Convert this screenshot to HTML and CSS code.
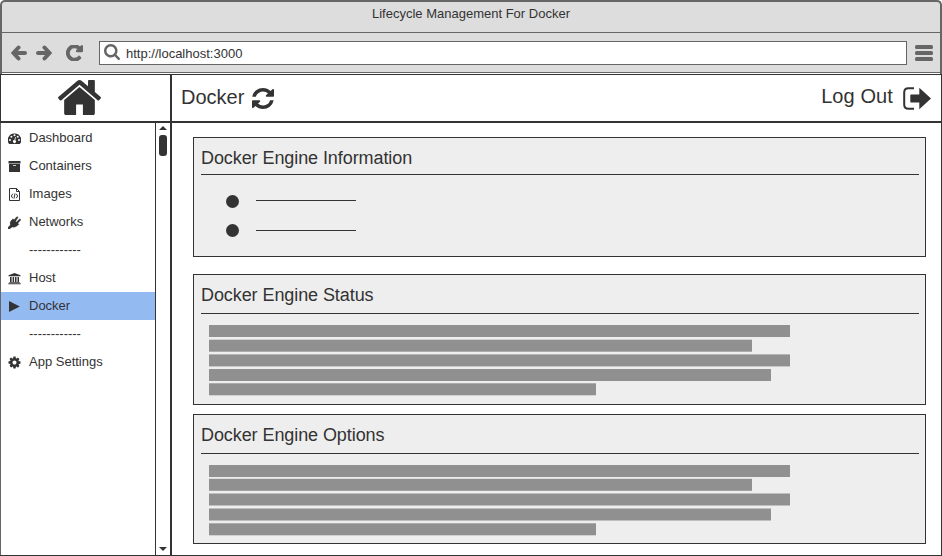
FILE: index.html
```html
<!DOCTYPE html>
<html lang="en">
<head>
<meta charset="utf-8">
<title>Lifecycle Management For Docker</title>
<link rel="stylesheet" href="styles.css">
</head>
<body>
<div class="window">
  <header class="chrome">
    <div class="titlebar">Lifecycle Management For Docker</div>
    <div class="toolbar">
      <svg class="nav back" viewBox="0 0 17 16"><path d="M8.500 2.500 3.500 8l5 5.500M4 8h11" fill="none" stroke="currentColor" stroke-width="4" stroke-linecap="round" stroke-linejoin="miter"/></svg>
      <svg class="nav forward" viewBox="0 0 17 16"><path d="M8.500 2.500l5 5.500-5 5.500M13 8H2" fill="none" stroke="currentColor" stroke-width="4" stroke-linecap="round" stroke-linejoin="miter"/></svg>
      <svg class="nav reload" viewBox="128 128 1536 1536"><path stroke="currentColor" stroke-width="110" d="M1664 256v448q0 26-19 45t-45 19h-448q-42 0-59-40-17-39 14-69l138-138q-148-137-349-137-104 0-198.500 40.500t-163.500 109.500-109.500 163.500-40.500 198.500 40.500 198.500 109.500 163.500 163.500 109.500 198.500 40.500q119 0 225-52t179-147q7-10 23-12 15 0 25 9l137 138q9 8 9.500 20.500t-7.500 22.500q-109 132-264 204.500t-327 72.500q-156 0-298-61t-245-164-164-245-61-298 61-298 164-245 245-164 298-61q147 0 284.500 55.500t244.500 156.500l130-129q29-31 70-14 39 17 39 59z"/></svg>
      <div class="address">
        <svg class="search" viewBox="64 128 1664 1664"><path d="M1216 832q0-185-131.500-316.500t-316.500-131.500-316.500 131.500-131.500 316.500 131.500 316.500 316.500 131.500 316.500-131.500 131.500-316.500zm512 832q0 52-38 90t-90 38q-54 0-90-38l-343-342q-179 124-399 124-143 0-273.500-55.500t-225-150-150-225-55.500-273.500 55.500-273.500 150-225 225-150 273.500-55.500 273.500 55.500 225 150 150 225 55.500 273.500q0 220-124 399l343 343q37 37 37 90z"/></svg>
        <span>http://localhost:3000</span>
      </div>
      <svg class="burger" viewBox="0 0 18 16"><rect width="18" height="4" rx="1.500"/><rect y="6" width="18" height="4" rx="1.500"/><rect y="12" width="18" height="4" rx="1.500"/></svg>
    </div>
  </header>
  <div class="topbar">
    <div class="brand">
      <svg class="home" viewBox="89 253 1614 1283" preserveAspectRatio="none"><path d="M1472 992v480q0 26-19 45t-45 19h-384v-384h-256v384h-384q-26 0-45-19t-19-45v-480q0-1 .5-3t.5-3l575-474 575 474q1 2 1 6zm223-69l-62 74q-8 9-21 11h-3q-13 0-21-7l-692-577-692 577q-12 8-24 7-13-2-21-11l-62-74q-8-10-7-23.500t11-21.500l719-599q32-26 76-26t76 26l244 204v-195q0-14 9-23t23-9h192q14 0 23 9t9 23v408l219 182q10 8 11 21.500t-7 23.500z"/></svg>
    </div>
    <div class="heading">
      <h1>Docker</h1>
      <svg class="refresh" viewBox="128 128 1536 1536" preserveAspectRatio="none"><path d="M1639 1056q0 5-1 7-64 268-268 434.500t-478 166.500q-146 0-282.500-55t-243.500-157l-129 129q-19 19-45 19t-45-19-19-45v-448q0-26 19-45t45-19h448q26 0 45 19t19 45-19 45l-137 137q71 66 161 102t187 36q134 0 250-65t186-179q11-17 53-117 8-23 30-23h192q13 0 22.500 9.500t9.500 22.500zm25-800v448q0 26-19 45t-45 19h-448q-26 0-45-19t-19-45 19-45l138-138q-148-137-349-137-134 0-250 65t-186 179q-11 17-53 117-8 23-30 23h-199q-13 0-22.500-9.500t-9.500-22.500v-7q65-268 270-434.500t480-166.500q146 0 284 55.500t245 156.500l130-129q19-19 45-19t45 19 19 45z"/></svg>
      <span class="logout">Log Out</span>
      <svg class="exit" viewBox="0 0 28 23"><path d="M11 1.200H5.500Q1.200 1.200 1.200 5.500v12q0 4.300 4.300 4.300H11" fill="none" stroke="currentColor" stroke-width="2"/><path d="M8 7.500q-.7 0-.7.700v6.600q0 .7.700.7h8.300v6.700L28 11.500 16.300.800v6.700z"/></svg>
    </div>
  </div>
  <div class="body">
    <nav class="menu">
      <a><svg viewBox="0 0 13 13"><path fill-rule="evenodd" d="M6.500 1.500A6.500 6.500 0 0 0 1 11.800q.2.200.5.200h10q.3 0 .5-.2A6.500 6.500 0 0 0 6.500 1.500zM1 8a1 1 0 0 1 2 0 1 1 0 0 1-2 0zM2.400 4.800a1 1 0 0 1 2 0 1 1 0 0 1-2 0zM5.500 3.300a1 1 0 0 1 2 0 1 1 0 0 1-2 0zM8.700 4.800a1 1 0 0 1 2 0 1 1 0 0 1-2 0zM10 8a1 1 0 0 1 2 0 1 1 0 0 1-2 0zM7.200 5l.7.200-.7 3a1.500 1.500 0 1 1-.8-.2z"/></svg>Dashboard</a>
      <a><svg viewBox="0 0 13 13"><path fill-rule="evenodd" d="M.5 1h12v2.500H.5zM1 4h11v8H1zm4 1.300v.8h3v-.8z"/></svg>Containers</a>
      <a><svg viewBox="0 0 13 13"><path d="M1.500.5h7l3 3v9h-10zM8.500.5v3h3M4.800 5.800 3.300 8l1.500 2.200M8.200 5.800 9.700 8l-1.500 2.200M7 5.500l-1 5" fill="none" stroke="currentColor"/></svg>Images</a>
      <a><svg viewBox="0 0 13 13"><path d="M5 2.800 6 3.800 8.700.9q1-.6 1.400.4L7.600 5.200 8.500 6 11.600 3q1.500-.2 1 1.100L9.900 7.300l1 1-.8.800q-2.800 3-6 1.800L1.500 13H0v-1.500L2.400 9Q1.200 6 4.200 3.600z" stroke="currentColor" stroke-width=".4"/></svg>Networks</a>
      <a class="divider">------------</a>
      <a><svg viewBox="0 0 13 13"><path d="M6.500 1 12.500 3.300v.9H.5v-.9zM2 5h1.600v5H2zM4.600 5h1.500v5H4.600zM7 5h1.500v5H7zM9.500 5H11v5H9.500zM1.200 10.200h10.600v.7H1.200zM.3 11.300h12.400v1H.3z"/></svg>Host</a>
      <a class="active"><svg viewBox="0 0 13 13"><path d="M1 1l10.800 5.500L1 12z"/></svg>Docker</a>
      <a class="divider">------------</a>
      <a><svg viewBox="64 64 1664 1664"><path d="M1152 896q0-106-75-181t-181-75-181 75-75 181 75 181 181 75 181-75 75-181zm512-109v222q0 12-8 23t-20 13l-185 28q-19 54-39 91 35 50 107 138 10 12 10 25t-9 23q-27 37-99 108t-94 71q-12 0-26-9l-138-108q-44 23-91 38-16 136-29 186-7 28-36 28h-222q-14 0-24.500-8.500t-11.500-21.500l-28-184q-49-16-90-37l-141 107q-10 9-25 9-14 0-25-11-126-114-165-168-7-10-7-23 0-12 8-23 15-21 51-66.500t54-70.500q-27-50-41-99l-183-27q-13-2-21-12.500t-8-23.500v-222q0-12 8-23t19-13l186-28q14-46 39-92-40-57-107-138-10-12-10-24 0-10 9-23 26-36 98.500-107.500t94.500-71.500q13 0 26 10l138 107q44-23 91-38 16-136 29-186 7-28 36-28h222q14 0 24.500 8.500t11.500 21.500l28 184q49 16 90 37l142-107q9-9 24-9 13 0 25 10 129 119 165 170 7 8 7 22 0 12-8 23-15 21-51 66.500t-54 70.500q26 50 41 98l183 28q13 2 21 12.500t8 23.500z"/></svg>App Settings</a>
    </nav>
    <div class="scrollbar">
      <svg class="arrow" viewBox="0 0 8 4"><path d="M0 4 4 0l4 4z"/></svg>
      <div class="thumb"></div>
      <svg class="arrow down" viewBox="0 0 8 4"><path d="M0 0h8L4 4z"/></svg>
    </div>
    <main class="content">
      <section class="card info">
        <h2>Docker Engine Information</h2>
        <ul class="points"><li></li><li></li></ul>
      </section>
      <section class="card status">
        <h2>Docker Engine Status</h2>
        <svg class="lines" viewBox="0 0 581 71"><rect width="581" height="12"/><rect y="14.700" width="543" height="12"/><rect y="29.400" width="581" height="12"/><rect y="44" width="562" height="12"/><rect y="58.300" width="387" height="12"/></svg>
      </section>
      <section class="card options">
        <h2>Docker Engine Options</h2>
        <svg class="lines" viewBox="0 0 581 71"><rect width="581" height="12"/><rect y="13.800" width="543" height="12"/><rect y="28.500" width="581" height="12"/><rect y="43.500" width="562" height="12"/><rect y="58.300" width="387" height="12"/></svg>
      </section>
    </main>
  </div>
</div>
</body>
</html>
```
FILE: styles.css
```css
* { box-sizing: border-box; }
body { margin: 0; background: #fff; color: #333; font: 13px "Liberation Sans", Arial, sans-serif; }
svg { display: block; flex: none; fill: currentColor; }
h1, h2, ul { margin: 0; padding: 0; font-weight: normal; }

.window { width: 942px; height: 556px; display: flex; flex-direction: column; overflow: hidden; }
.chrome { height: 74px; flex: none; border: 2px solid #666; border-bottom: 0; border-radius: 5px 5px 0 0; background: #ddd; box-shadow: inset 0 -1px #fff; }
.titlebar { height: 31px; border-bottom: 1px solid #666; text-align: center; line-height: 24px; }
.toolbar { height: 40px; display: flex; align-items: center; border-bottom: 1px solid #666; color: #666; padding: 0 7px 0 8px; }
.nav { width: 17px; height: 16px; }
.forward { margin-left: 9px; }
.reload { margin-left: 13px; }
.address { width: 808px; height: 24px; margin-left: 16px; display: flex; align-items: center; border: 1px solid #666; background: #fff; color: #333; padding-left: 4px; }
.address span { padding-top: 2px; }
.search { width: 16px; height: 16px; color: #666; margin: 0 6px 1px 0; }
.burger { width: 18px; height: 16px; margin-left: 8px; }

.topbar { height: 49px; flex: none; display: flex; border: 1px solid #333; border-bottom-width: 2px; }
.brand { width: 171px; border-right: 2px solid #333; padding: 5px 0 0 57px; }
.home { width: 43px; height: 35px; }
.heading { flex: 1; display: flex; align-items: flex-start; padding-left: 9px; }
h1 { font-size: 20px; line-height: 24px; margin-top: 10px; width: 63px; white-space: nowrap; }
.refresh { width: 22px; height: 21px; margin: 13px 0 0 8px; }
.logout { font-size: 20px; line-height: 24px; margin: 9px 10px 0 auto; letter-spacing: .1px; }
.exit { width: 28px; height: 23px; margin: 12px 10px 0 0; }

.body { flex: 1; display: flex; border: solid #333; border-width: 0 1px 1px 0; }
.menu { width: 155px; border-left: 1px solid #666; padding-top: 1px; }
.menu a { height: 28px; display: flex; align-items: center; padding: 0 0 2px 7px; }
.menu svg { width: 13px; height: 13px; margin: 2px 8px 0 0; }
.menu .divider { padding-left: 28px; }
.menu .active { background: #94baf2; }
.scrollbar { width: 17px; border: solid #333; border-width: 0 2px 0 1px; display: flex; flex-direction: column; align-items: center; padding: 3px 0 4px; }
.arrow { width: 8px; height: 4px; }
.thumb { width: 8px; height: 21px; margin-top: 5px; border-radius: 3px; background: #333; }
.down { margin-top: auto; }

.content { flex: 1; padding: 14px 15px 0 21px; }
.card { border: 1px solid #333; background: #eee; padding: 0 6px 0 7px; }
.info { height: 120px; }
.status { height: 131px; margin-top: 17px; }
.options { height: 130px; margin-top: 9px; }
.card h2 { height: 39px; border-bottom: 1px solid #333; font-size: 18px; line-height: 41px; letter-spacing: -.08px; white-space: nowrap; }
.info h2 { height: 37px; line-height: 40px; }
.lines { width: 581px; height: 71px; margin: 11px 0 0 8px; fill: #909090; }
.points { list-style: none; margin: 20px 0 0 25px; }
.points li { display: flex; align-items: flex-start; height: 29px; }
.points li::before { content: ""; width: 13px; height: 13px; border-radius: 50%; background: #333; }
.points li::after { content: ""; width: 100px; height: 1px; background: #333; margin: 5px 0 0 17px; }
.points li + li::after { margin-top: 6px; }
```
